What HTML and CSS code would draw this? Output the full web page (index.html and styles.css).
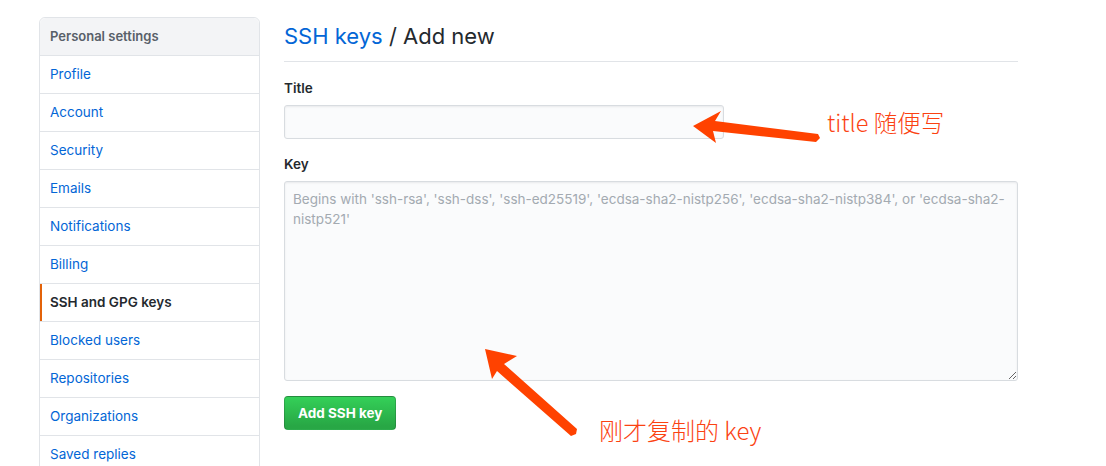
FILE: index.html
```html
<!DOCTYPE html>
<html lang="zh-CN">
<head>
<meta charset="utf-8">
<title>SSH keys / Add new</title>
<link rel="stylesheet" href="styles.css">
</head>
<body>
<div class="page">
  <nav class="menu">
    <div class="menu-heading">Personal settings</div>
    <a class="menu-item" href="#">Profile</a>
    <a class="menu-item" href="#">Account</a>
    <a class="menu-item" href="#">Security</a>
    <a class="menu-item" href="#">Emails</a>
    <a class="menu-item" href="#">Notifications</a>
    <a class="menu-item" href="#">Billing</a>
    <a class="menu-item selected" href="#">SSH and GPG keys</a>
    <a class="menu-item" href="#">Blocked users</a>
    <a class="menu-item" href="#">Repositories</a>
    <a class="menu-item" href="#">Organizations</a>
    <a class="menu-item" href="#">Saved replies</a>
  </nav>
  <main class="content">
    <h2 class="subhead"><a href="#">SSH keys</a> / Add new</h2>
    <form class="form">
      <div class="form-group">
        <label class="label" for="title">Title</label>
        <input class="input title-input" id="title" type="text">
      </div>
      <div class="form-group">
        <label class="label" for="key">Key</label>
        <textarea class="input key-input" id="key" placeholder="Begins with 'ssh-rsa', 'ssh-dss', 'ssh-ed25519', 'ecdsa-sha2-nistp256', 'ecdsa-sha2-nistp384', or 'ecdsa-sha2-nistp521'"></textarea>
      </div>
      <button class="btn" type="button">Add SSH key</button>
    </form>
  </main>
</div>

<svg class="arrows" width="1106" height="466" viewBox="0 0 1106 466">
  <polygon fill="#ff4200" points="693,126 721,111 715,121 818,134 820,138 816,142 713,131 716,143"/>
  <polygon fill="#ff4200" points="485,349 517,356 504,364 577,429 576,434 571,436 497,371 492,379"/>
</svg>
<div class="note note-title">title 随便写</div>
<div class="note note-key">刚才复制的 key</div>
</body>
</html>
```
FILE: styles.css
```css
html, body {
  margin: 0;
  padding: 0;
  background: #fff;
}
body {
  font-family: Inter, Roboto, "Liberation Sans", Arial, sans-serif;
  font-size: 14px;
  line-height: 1.5;
  color: #24292e;
  width: 1106px;
  height: 466px;
  overflow: hidden;
  position: relative;
}
.page {
  display: flex;
  align-items: flex-start;
  gap: 24px;
  padding: 17px 0 0 39px;
}
.menu {
  width: 219px;
  flex: none;
  border: 1px solid #e1e4e8;
  border-radius: 6px 6px 0 0;
  display: flex;
  flex-direction: column;
}
.menu-heading {
  height: 37px;
  line-height: 37px;
  padding: 0 10px;
  font-size: 13px;
  font-weight: 600;
  color: #586069;
  background: #f3f4f6;
  border-bottom: 1px solid #e1e4e8;
  border-radius: 6px 6px 0 0;
}
.menu-item {
  height: 37px;
  line-height: 37px;
  padding: 0 10px;
  font-size: 13.5px;
  color: #0366d6;
  text-decoration: none;
  border-bottom: 1px solid #e1e4e8;
}
.menu-item.selected {
  color: #24292e;
  font-weight: 600;
  box-shadow: inset 2px 0 0 #e36209;
}
.content {
  width: 734px;
  flex: none;
}
.subhead {
  margin: 0 0 16px;
  padding: 1px 0 7px;
  font-size: 22px;
  line-height: 36px;
  font-weight: 400;
  border-bottom: 1px solid #e1e4e8;
}
.subhead a {
  color: #0366d6;
  text-decoration: none;
}
.form {
  display: flex;
  flex-direction: column;
  align-items: flex-start;
}
.form-group {
  display: flex;
  flex-direction: column;
  margin-bottom: 15px;
  width: 100%;
}
.label {
  font-size: 13.5px;
  font-weight: 600;
  line-height: 21px;
  margin-bottom: 6px;
}
.input {
  box-sizing: border-box;
  font-family: inherit;
  font-size: 13.5px;
  line-height: 20px;
  color: #24292e;
  background: #fafbfc;
  border: 1px solid #d8dce0;
  border-radius: 3px;
  box-shadow: inset 0 1px 2px rgba(27, 31, 35, 0.075);
  padding: 6px 8px;
  outline: none;
}
.title-input {
  width: 440px;
  height: 34px;
}
.key-input {
  width: 734px;
  height: 200px;
  padding: 7px 8px;
  resize: vertical;
  display: block;
}
.key-input::placeholder {
  color: #a3aab1;
}
.btn {
  font-family: inherit;
  font-size: 13.5px;
  font-weight: 700;
  line-height: 20px;
  color: #fff;
  padding: 6px 13px;
  height: 34px;
  border: 1px solid rgba(27, 31, 35, 0.2);
  border-radius: 4px;
  background-color: #28a745;
  background-image: linear-gradient(-180deg, #34d058 0%, #28a745 90%);
}
.arrows {
  position: absolute;
  left: 0;
  top: 0;
  pointer-events: none;
}
.note {
  position: absolute;
  font-family: "Noto Sans CJK SC", "Noto Sans", sans-serif;
  font-weight: 300;
  font-size: 24px;
  line-height: 30px;
  color: #fb4212;
  white-space: nowrap;
}
.note-title {
  left: 827px;
  top: 107px;
  font-size: 23.5px;
}
.note-key {
  left: 599px;
  top: 415px;
}
```
